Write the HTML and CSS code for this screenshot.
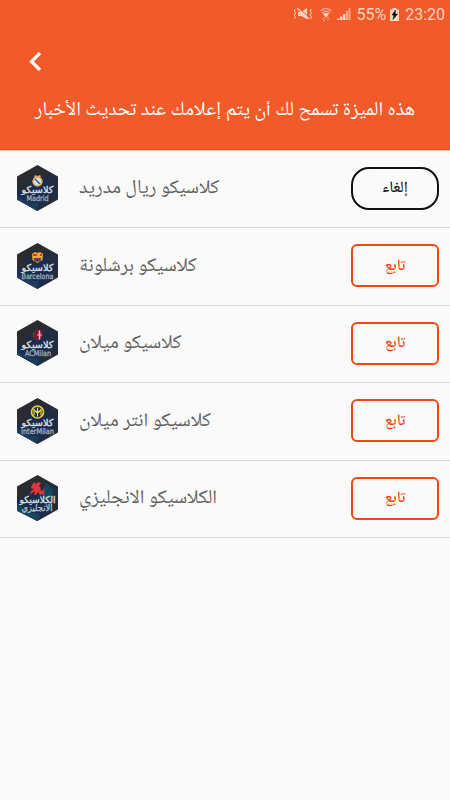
FILE: index.html
```html
<!DOCTYPE html>
<html lang="ar">
<head>
<meta charset="utf-8">
<title>كلاسيكو</title>
<link rel="stylesheet" href="styles.css">
</head>
<body>
<svg class="defs" width="0" height="0" aria-hidden="true">
  <defs>
    <linearGradient id="shade" x1="0" y1="0" x2="1" y2="1">
      <stop offset="0" stop-color="#292b2f"/><stop offset=".45" stop-color="#2a2c31"/><stop offset=".65" stop-color="#222c42"/><stop offset="1" stop-color="#272b32"/>
    </linearGradient>
    <clipPath id="hex"><path d="M20.5 0 41 11.5V34.5L20.5 46 0 34.5V11.5Z"/></clipPath>
    <g id="badge" clip-path="url(#hex)">
      <path d="M0 0H41V46H0Z" fill="url(#shade)"/>
      <path d="M0 24Q10 31 14 24Q8 19 10 12Q14 21 20 20Q29 18 31 7Q35 15 29 23Q37 24 38 18Q41 29 31 35L20 46 0 35Z" fill="#1b2c4c"/>
      <path d="M0 30Q9 39 22 38L20 46 0 36Z" fill="#1c3c5a"/>
    </g>
  </defs>
</svg>
<header class="header">
  <div class="status">
    <svg class="mute" width="20" height="16" viewBox="0 0 20 16"><path d="M5 6H8L14 2V13L8 10H5Z" fill="#ffd1c0"/><path d="M5 1.500 16 11" stroke="#f15a29" stroke-width="1"/><path d="M4 2 16 13" stroke="#ffd1c0" stroke-width="1.500"/><path d="M2.500 3 1.300 5 2.500 7 1.300 9 2.500 11 1.500 13M18.500 3 17 5 18.500 7 17 9 18.500 11 17.500 13" fill="none" stroke="#ffd1c0"/></svg>
    <svg class="wifi" width="12" height="15" viewBox="0 0 12 15"><path d="M.5 4Q6-1 11.500 4M2 6Q6 2.500 10 6" fill="none" stroke="#f9a589" stroke-width="1.500"/><path d="M3 7Q6 5 9 7L6 10.500Z" fill="#ffd8ca"/><path d="M4 10V14M2.500 12.500 4 14 5.500 12.500M8 14V10M6.500 11.500 8 10 9.500 11.500" fill="none" stroke="#f8a080" stroke-width=".8"/></svg>
    <svg class="signal" width="14" height="14" viewBox="0 0 14 14"><path d="M0 13V11.500H2.500V13ZM3 13V9.500H5.500V13ZM6 13V7H8.500V13Z" fill="#ffd5c6"/><path d="M9 13V4H11V13ZM11.500 13V1H13.500V13Z" fill="#f9a88d"/></svg>
    <span class="percent">55%</span>
    <svg class="battery" width="9" height="13" viewBox="0 0 9 13"><path d="M0 1.500H2.500V0H6.500V1.500H9V13H0Z" fill="#ffd5c6"/><path d="M5.500 2 2 7H4L3 11.500 7.500 6H5Z" fill="#111" stroke="#111" stroke-width=".6"/></svg>
    <span class="clock">23:20</span>
  </div>
  <svg class="back" width="14" height="20" viewBox="0 0 14 20"><path d="M12 2 3.500 10.500 12 19" fill="none" stroke="#fff" stroke-width="3.200"/></svg>
  <p class="intro" dir="rtl">هذه الميزة تسمح لك أن يتم إعلامك عند تحديث الأخبار</p>
</header>
<main class="list">
  <section class="row">
    <svg class="logo" width="41" height="46" viewBox="0 0 41 46"><use href="#badge"/>
      <circle cx="20.500" cy="16.500" r="5" fill="#dce1e6"/><circle cx="20.500" cy="16.500" r="4.200" fill="none" stroke="#d7b35e" stroke-width="1.200"/><path d="M18 14 23 19" stroke="#315ca4" stroke-width="1.600"/><path d="M17 12 18 10 20.500 11 23 10 24 12Z" fill="#dfa14b"/>
      <text class="ar" x="20.500" y="28" textLength="32" lengthAdjust="spacingAndGlyphs">كلاسيكو</text><text class="en" x="20.500" y="36" textLength="22" lengthAdjust="spacingAndGlyphs">Madrid</text></svg>
    <h2 class="name" dir="rtl">كلاسيكو ريال مدريد</h2>
    <button class="action cancel">إلغاء</button>
  </section>
  <section class="row">
    <svg class="logo" width="41" height="46" viewBox="0 0 41 46"><use href="#badge"/>
      <path d="M15 11 18 9 20.500 10 23 9 26 11 25.500 17 20.500 20 15.500 17Z" fill="#e7ad31"/><path d="M16 11H20V13H16ZM23 11H25V13H23Z" fill="#cb3543"/><path d="M17 15H24L23.500 18 20.500 19 17.500 18Z" fill="#303c82"/><path d="M19 15V18M22 15V18" stroke="#b12950"/>
      <text class="ar" x="20.500" y="27.500" textLength="32" lengthAdjust="spacingAndGlyphs">كلاسيكو</text><text class="en" x="20.500" y="35.500" textLength="32" lengthAdjust="spacingAndGlyphs">Barcelona</text></svg>
    <h2 class="name" dir="rtl">كلاسيكو برشلونة</h2>
    <button class="action">تابع</button>
  </section>
  <section class="row">
    <svg class="logo" width="41" height="46" viewBox="0 0 41 46"><use href="#badge"/>
      <ellipse cx="20.500" cy="15" rx="4.600" ry="5.200" fill="#b72443"/><path d="M18 11V19M20 10V20" stroke="#161c28"/><path d="M22.500 10.500V19.500M20 15H25" stroke="#e0bdc5" stroke-width="1.200"/>
      <text class="ar" x="20.500" y="28" textLength="32" lengthAdjust="spacingAndGlyphs">كلاسيكو</text><text class="en" x="21" y="36" textLength="26" lengthAdjust="spacingAndGlyphs">ACMilan</text></svg>
    <h2 class="name" dir="rtl">كلاسيكو ميلان</h2>
    <button class="action">تابع</button>
  </section>
  <section class="row">
    <svg class="logo" width="41" height="46" viewBox="0 0 41 46"><use href="#badge"/>
      <circle cx="20.500" cy="14" r="6" fill="#24304b" stroke="#dfd336" stroke-width="1.700"/><path d="M17 17.500V11.500L20.500 15.500 24 11.500V17.500M18 13.500H23M20.500 9.500V18.500" fill="none" stroke="#eee244" stroke-width="1.100"/>
      <text class="ar" x="20.500" y="28" textLength="32" lengthAdjust="spacingAndGlyphs">كلاسيكو</text><text class="en" x="20.500" y="36" textLength="33" lengthAdjust="spacingAndGlyphs">InterMilan</text></svg>
    <h2 class="name" dir="rtl">كلاسيكو انتر ميلان</h2>
    <button class="action">تابع</button>
  </section>
  <section class="row">
    <svg class="logo" width="41" height="46" viewBox="0 0 41 46"><use href="#badge"/>
      <path d="M22 20 29 8 36 14 34 29 28 24ZM2 29 10 36 23 41 20 46 0 36Z" fill="#17455d"/>
      <path d="M15 10 17 7 19 9 21 7 24 8 22 11 24 13 23 15 26 16 28 13 27 18 28 20 25 19 23 20 21 17 19 20 17 19 18 16 15 18 13 20 14 16 17 14 14 13Z" fill="#e4343e"/>
      <text class="ar" x="20.500" y="27.500" textLength="36" lengthAdjust="spacingAndGlyphs">الكلاسيكو</text><text class="ar league" x="20" y="36" textLength="31" lengthAdjust="spacingAndGlyphs">الانجليزي</text></svg>
    <h2 class="name" dir="rtl">الكلاسيكو الانجليزي</h2>
    <button class="action">تابع</button>
  </section>
</main>
</body>
</html>
```
FILE: styles.css
```css
* { box-sizing: border-box; }
body { margin: 0; width: 450px; height: 800px; overflow: hidden; background: #fafafa; font-family: Roboto, "Noto Naskh Arabic UI", "Noto Naskh Arabic", "DejaVu Sans", sans-serif; }
.defs { display: block; height: 0; }
.header { height: 151px; background: #f15a29; border-bottom: 1px solid #fbcabf; box-shadow: inset 0 -1px #ed4c14; color: #fff; }
.status { height: 28px; display: flex; align-items: center; justify-content: flex-end; padding-right: 5px; color: #ffd1c0; font-size: 16px; }
.wifi { margin: 0 5px 0 7px; }
.signal { margin-right: 5px; }
.percent { margin-right: 4px; }
.battery { margin-right: 6px; }
.back { display: block; margin: 23px 0 0 28px; }
.intro { margin: 27px 0 0; height: 26px; line-height: 26px; font-family: "Noto Naskh Arabic UI", "Noto Naskh Arabic", "DejaVu Sans", sans-serif; font-size: 19.850px; text-align: center; white-space: nowrap; }
.row { height: 77.6px; display: flex; align-items: center; padding: 0 11px 1.500px 17px; border-bottom: 1px solid #d7d7d7; }
.row:first-child { height: 77px; padding-bottom: 2px; }
.logo { flex: none; margin-right: 21px; overflow: visible; }
.ar { font: 9.5px "DejaVu Sans", sans-serif; fill: #dde2e8; stroke: #dde2e8; stroke-width: .3px; text-anchor: middle; }
.en { font: 7.8px "DejaVu Sans", sans-serif; fill: #a8b3c0; stroke: #a8b3c0; stroke-width: .3px; text-anchor: middle; }
.league { fill: #b8c6d2; stroke: #b8c6d2; font-size: 9px; }
.name { margin: 0; padding-top: 2px; font-family: "Noto Naskh Arabic UI", "Noto Naskh Arabic", "DejaVu Sans", sans-serif; font-size: 19.700px; font-weight: 400; line-height: 30px; color: #606060; white-space: nowrap; }
.action { margin-left: auto; width: 88px; height: 43px; padding: 0; border: 2px solid #f04812; border-radius: 6px; background: #fafafa; color: #f03b0a; font: 500 16px "Noto Naskh Arabic UI", "Noto Naskh Arabic", "DejaVu Sans", sans-serif; }
.cancel { border-color: #111; border-radius: 18px; color: #111; }
```
